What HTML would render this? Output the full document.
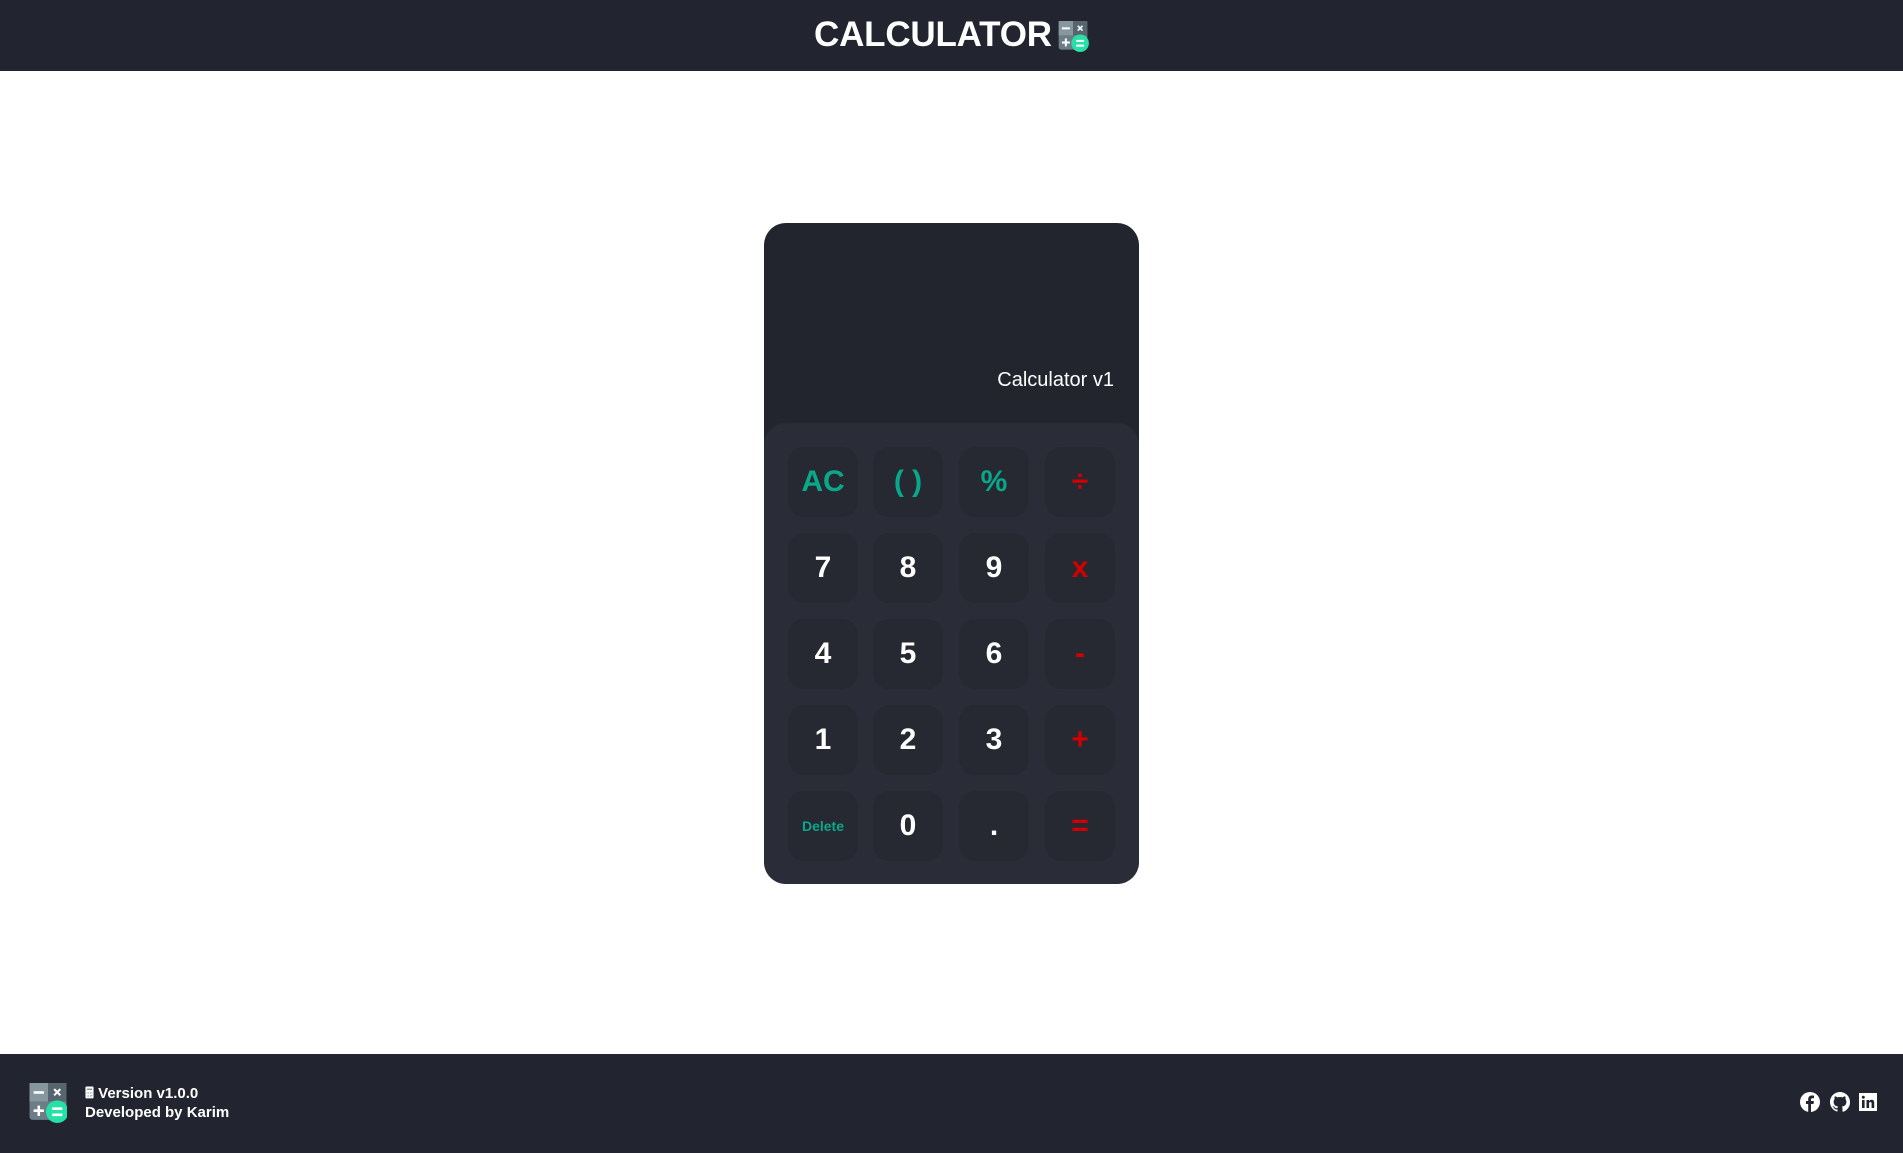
<!DOCTYPE html>
<html><head><style>
*{margin:0;padding:0;box-sizing:border-box}
body{width:1903px;height:1153px;background:#fff;font-family:"Liberation Sans",sans-serif;position:relative;overflow:hidden}
.hdr{position:absolute;left:0;top:0;width:1903px;height:71px;background:#22252f}
.title{position:absolute;left:814px;top:15px;font-size:35px;font-weight:bold;color:#fff;letter-spacing:-0.2px;line-height:40px}
.calc{position:absolute;left:764px;top:223px;width:375px;height:661px;background:#22252e;border-radius:22px;overflow:hidden}
.disp{position:absolute;right:25px;top:146px;color:#fff;font-size:20px}
.pad{position:absolute;left:0;top:200px;width:375px;height:461px;background:#2a2d37;border-radius:22px 22px 0 0}
.b{position:absolute;width:70px;height:70px;border-radius:16px;background:#262832;color:#fff;font-weight:bold;font-size:30px;display:flex;align-items:center;justify-content:center}
.g{color:#0aa88a}.r{color:#d40000}
.ftr{position:absolute;left:0;top:1054px;width:1903px;height:99px;background:#22252f}
.ft{position:absolute;left:85px;color:#fff;font-size:15px;font-weight:bold}
</style></head><body>
<div class="hdr"></div>
<div class="title">CALCULATOR</div>
<svg style="position:absolute;left:1057px;top:21px" width="32" height="31" viewBox="0 0 36 39">
<rect x="0" y="0" width="36" height="36" rx="3" fill="#6c7d87"/><rect x="18" y="0" width="18" height="18" fill="#56656e"/><rect x="0" y="0" width="18" height="18" fill="#86979f"/>
<rect x="4" y="8" width="10" height="2.5" fill="#fff"/><path d="M24 6l6 6M30 6l-6 6" stroke="#fff" stroke-width="2"/>
<path d="M9 22v10M4 27h10" stroke="#fff" stroke-width="2.5"/><circle cx="27" cy="28" r="11" fill="#26e0a8"/><path d="M22 25h10M22 31h10" stroke="#fff" stroke-width="2.5"/></svg>
<div class="calc">
<div class="disp">Calculator v1</div>
<div class="pad">
<div class="b g" style="left:24px;top:24px">AC</div>
<div class="b g" style="left:109px;top:24px">( )</div>
<div class="b g" style="left:195px;top:24px">%</div>
<div class="b r" style="left:281px;top:24px">÷</div>
<div class="b" style="left:24px;top:110px">7</div>
<div class="b" style="left:109px;top:110px">8</div>
<div class="b" style="left:195px;top:110px">9</div>
<div class="b r" style="left:281px;top:110px">x</div>
<div class="b" style="left:24px;top:196px">4</div>
<div class="b" style="left:109px;top:196px">5</div>
<div class="b" style="left:195px;top:196px">6</div>
<div class="b r" style="left:281px;top:196px">-</div>
<div class="b" style="left:24px;top:282px">1</div>
<div class="b" style="left:109px;top:282px">2</div>
<div class="b" style="left:195px;top:282px">3</div>
<div class="b r" style="left:281px;top:282px">+</div>
<div class="b g" style="left:24px;top:368px;font-size:14px">Delete</div>
<div class="b" style="left:109px;top:368px">0</div>
<div class="b" style="left:195px;top:368px">.</div>
<div class="b r" style="left:281px;top:368px">=</div>
</div></div>
<div class="ftr"></div>
<svg style="position:absolute;left:29px;top:1083px" width="38" height="40" viewBox="0 0 36 39">
<rect x="0" y="0" width="36" height="36" rx="3" fill="#6c7d87"/><rect x="18" y="0" width="18" height="18" fill="#56656e"/><rect x="0" y="0" width="18" height="18" fill="#86979f"/>
<rect x="4" y="8" width="10" height="2.5" fill="#fff"/><path d="M24 6l6 6M30 6l-6 6" stroke="#fff" stroke-width="2"/>
<path d="M9 22v10M4 27h10" stroke="#fff" stroke-width="2.5"/><circle cx="27" cy="28" r="11" fill="#26e0a8"/><path d="M22 25h10M22 31h10" stroke="#fff" stroke-width="2.5"/></svg>
<div class="ft" style="top:1083px">🖩 Version v1.0.0</div>
<div class="ft" style="top:1104px">Developed by Karim</div>
<svg style="position:absolute;left:1800px;top:1092px" width="20" height="20" viewBox="0 0 20 20"><circle cx="10" cy="10" r="10" fill="#fff"/><path d="M11 20v-8h2.5l.4-3H11V7.5c0-.8.3-1.3 1.4-1.3H14V3.6c-.3 0-1.2-.1-2.2-.1-2.2 0-3.6 1.300-3.6 3.700V9H6v3h2.2v8z" fill="#22252f"/></svg>
<svg style="position:absolute;left:1830px;top:1092px" width="20" height="20" viewBox="0 0 16 16"><path fill="#fff" d="M8 0C3.58 0 0 3.58 0 8c0 3.54 2.29 6.53 5.47 7.590.4.07.55-.17.55-.38v-1.33c-2.23.48-2.700-.95-2.700-.95-.36-.92-.89-1.170-.89-1.170-.73-.5.05-.49.05-.49.8.06 1.23.83 1.23.83.72 1.23 1.880.87 2.340.66.07-.52.28-.87.51-1.070-1.780-.2-3.650-.89-3.650-3.950 0-.87.31-1.590.82-2.150-.08-.2-.36-1.020.08-2.120 0 0 .67-.21 2.200.82a7.600 7.600 0 0 1 4 0c1.530-1.040 2.200-.82 2.200-.82.44 1.100.16 1.920.08 2.120.51.56.82 1.270.82 2.150 0 3.070-1.870 3.750-3.650 3.950.29.25.54.73.54 1.480v2.200c0 .21.15.46.55.38A8 8 0 0 0 16 8c0-4.420-3.580-8-8-8z"/></svg>
<svg style="position:absolute;left:1859px;top:1093px" width="18" height="18" viewBox="0 0 18 18"><rect width="18" height="18" fill="#fff"/><rect x="3" y="7" width="2.600" height="8" fill="#22252f"/><circle cx="4.300" cy="4.300" r="1.500" fill="#22252f"/><path d="M7.500 7h2.500v1.200c.5-.8 1.400-1.400 2.600-1.400 2 0 2.600 1.300 2.600 3.200V15h-2.600v-4.300c0-1-.3-1.700-1.200-1.700-1 0-1.300.7-1.300 1.700V15H7.500z" fill="#22252f"/></svg>
</body></html>
